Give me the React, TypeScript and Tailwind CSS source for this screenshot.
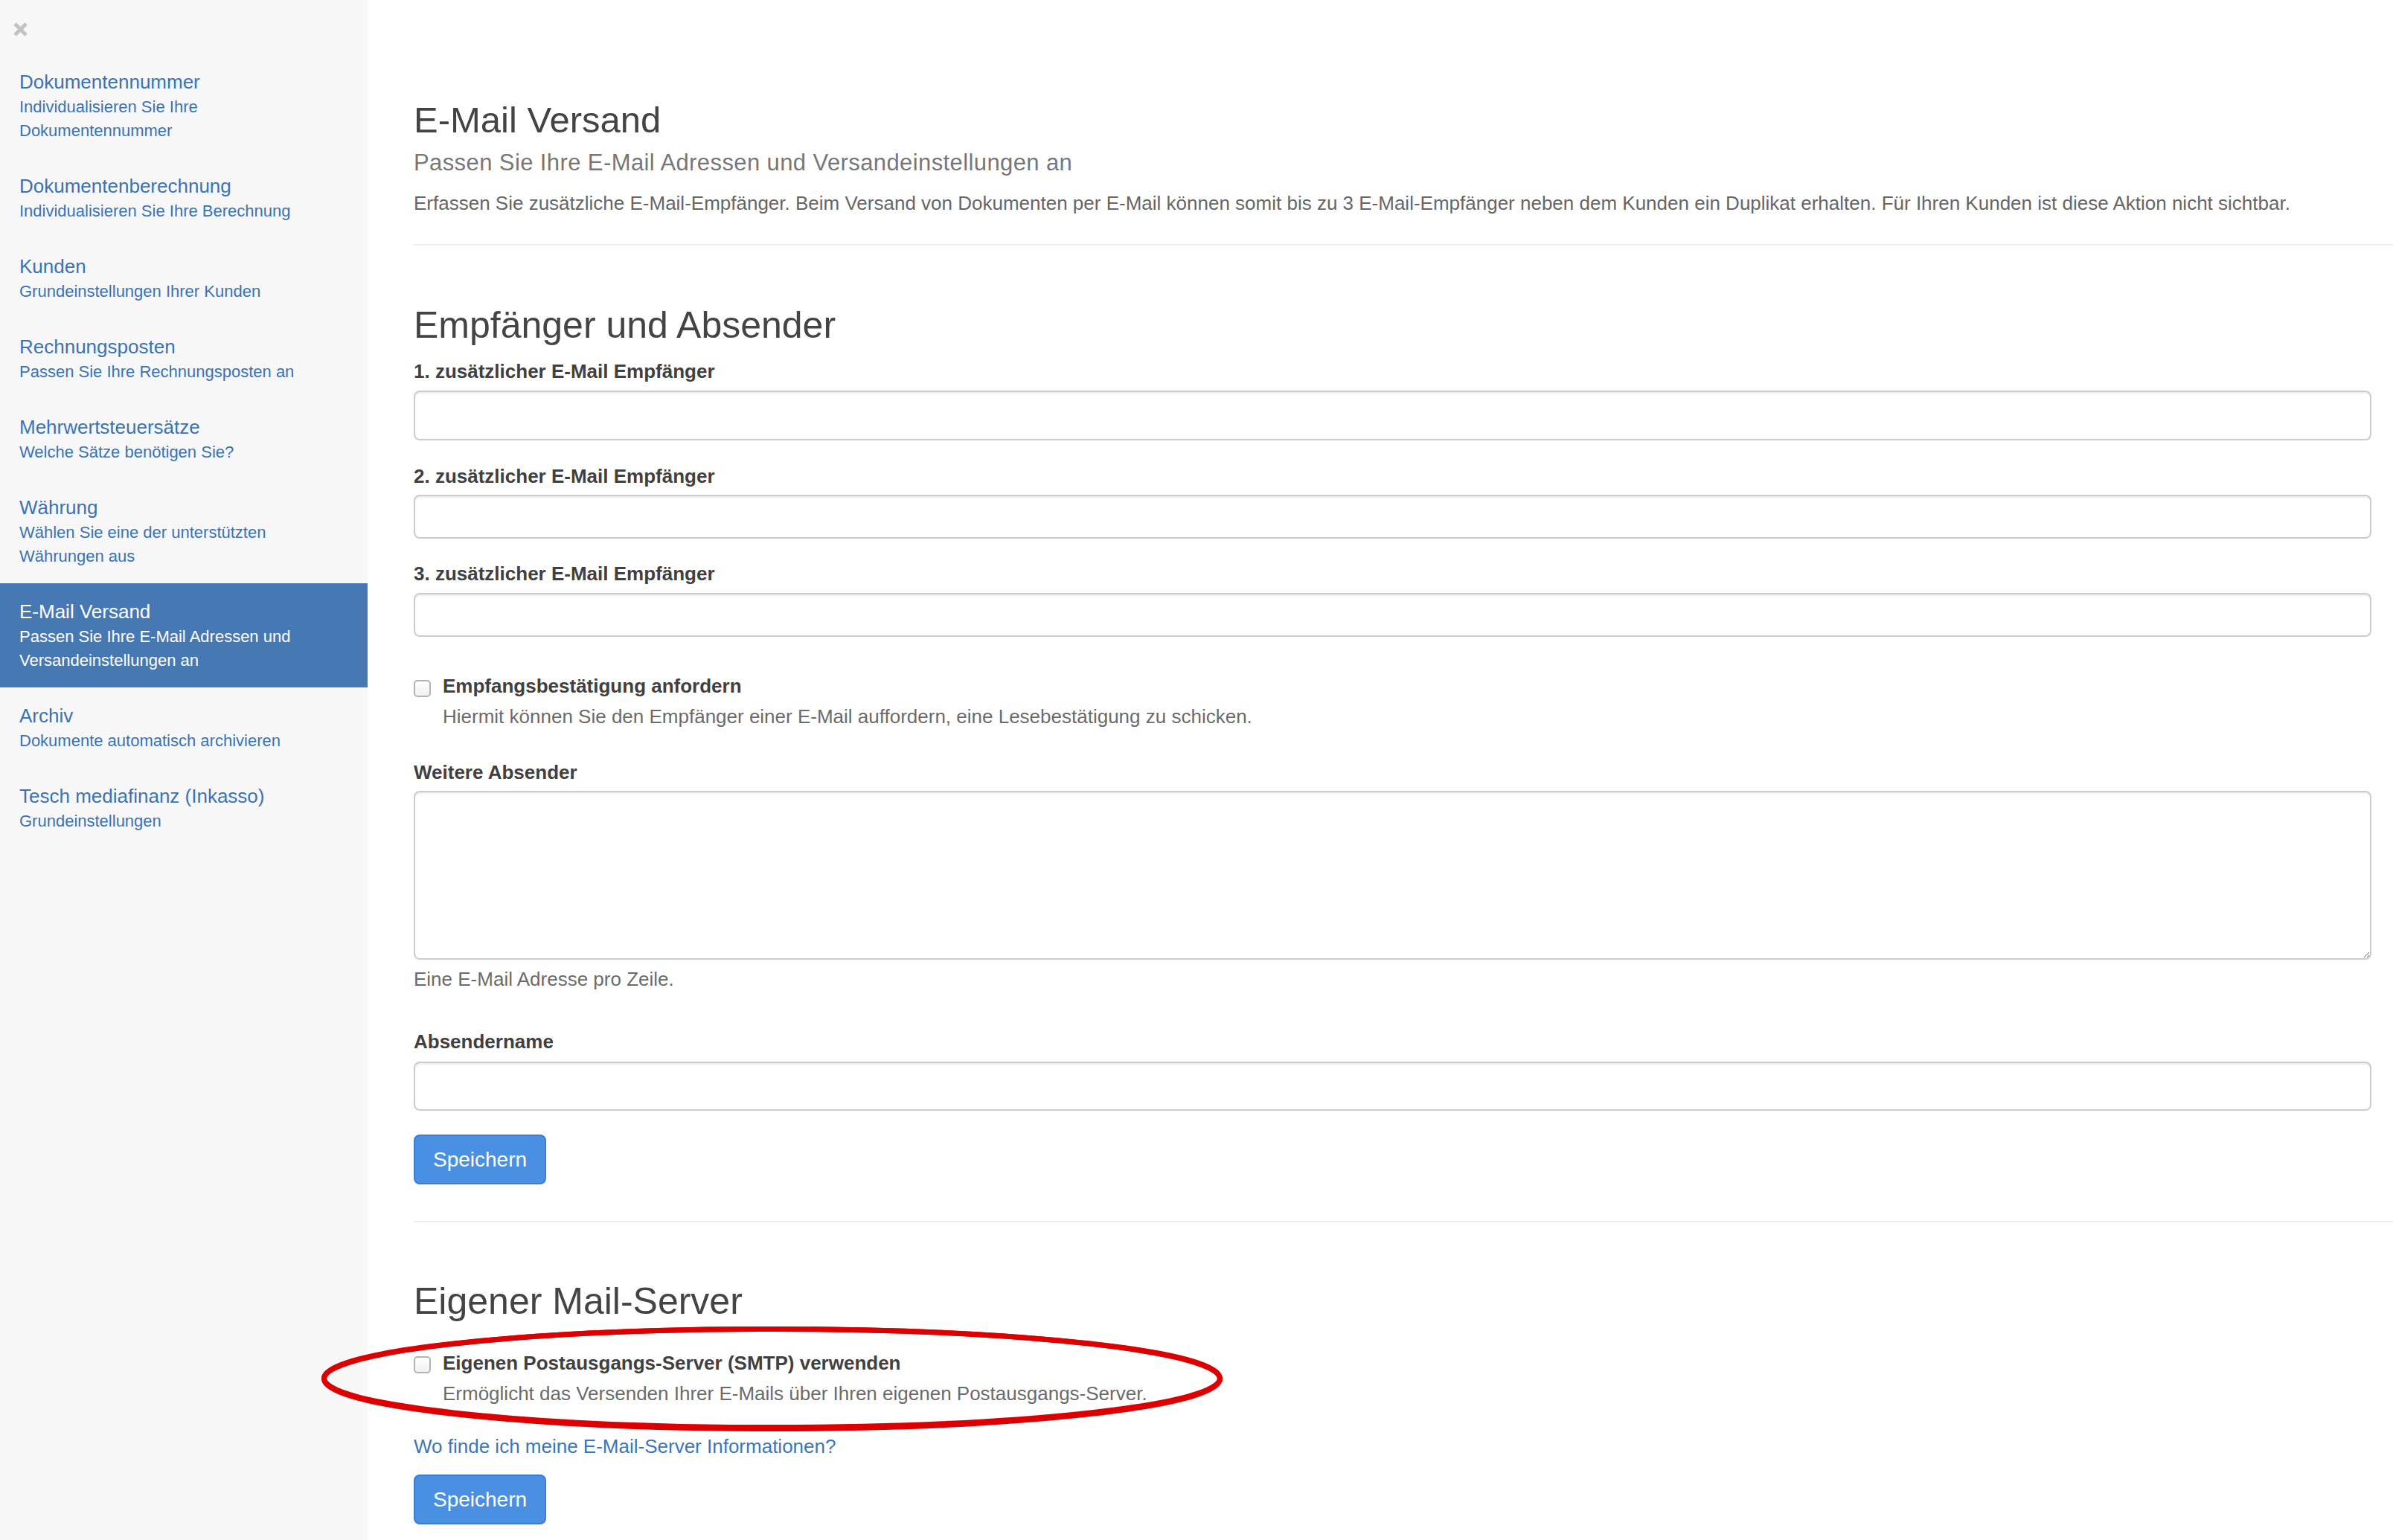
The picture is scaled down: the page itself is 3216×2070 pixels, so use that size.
import React from "react";

type NavItem = { title: string; sub: string[]; active?: boolean };

const navItems: NavItem[] = [
  { title: "Dokumentennummer", sub: ["Individualisieren Sie Ihre", "Dokumentennummer"] },
  { title: "Dokumentenberechnung", sub: ["Individualisieren Sie Ihre Berechnung"] },
  { title: "Kunden", sub: ["Grundeinstellungen Ihrer Kunden"] },
  { title: "Rechnungsposten", sub: ["Passen Sie Ihre Rechnungsposten an"] },
  { title: "Mehrwertsteuersätze", sub: ["Welche Sätze benötigen Sie?"] },
  { title: "Währung", sub: ["Wählen Sie eine der unterstützten", "Währungen aus"] },
  {
    title: "E-Mail Versand",
    sub: ["Passen Sie Ihre E-Mail Adressen und", "Versandeinstellungen an"],
    active: true,
  },
  { title: "Archiv", sub: ["Dokumente automatisch archivieren"] },
  { title: "Tesch mediafinanz (Inkasso)", sub: ["Grundeinstellungen"] },
];

const Sidebar: React.FC = () => (
  <aside className="w-[494px] shrink-0 bg-[#f7f7f7] pt-[29px]">
    <button className="ml-[17px] block h-[21px] w-[21px]">
      <svg viewBox="0 0 21 21" className="h-[21px] w-[21px]">
        <path d="M3 3 L18 18 M18 3 L3 18" stroke="#c2c2c2" strokeWidth="5" />
      </svg>
    </button>
    <nav className="mt-[22px]">
      {navItems.map((item) => (
        <a
          key={item.title}
          href="#"
          className={
            item.active
              ? "block bg-[#4679b4] px-[26px] py-[20px] text-white"
              : "block px-[26px] py-[20px] text-[#3a73b5]"
          }
        >
          <div className="text-[26px] leading-[36px]">{item.title}</div>
          {item.sub.map((line) => (
            <div key={line} className="text-[22px] leading-[32px]">
              {line}
            </div>
          ))}
        </a>
      ))}
    </nav>
  </aside>
);

const TextInput: React.FC<{ h: string }> = ({ h }) => (
  <input
    type="text"
    className={`block w-full ${h} rounded-[8px] border-2 border-[#cccccc] bg-white px-4 shadow-[inset_0_2px_2px_rgba(0,0,0,0.075)] outline-none`}
  />
);

const Label: React.FC<{ children: React.ReactNode; className?: string }> = ({
  children,
  className = "",
}) => (
  <label className={`block text-[26px] font-bold leading-[36px] text-[#404040] ${className}`}>
    {children}
  </label>
);

const SaveButton: React.FC<{ className?: string }> = ({ className = "" }) => (
  <button
    className={`block h-[67px] w-[178px] rounded-[8px] border-2 border-[#3b7dd6] bg-[#4a90e2] text-[28px] text-white ${className}`}
  >
    Speichern
  </button>
);

const CheckRow: React.FC<{ label: string; help: string; boxTop: string }> = ({
  label,
  help,
  boxTop,
}) => (
  <div className="flex">
    <input
      type="checkbox"
      className={`${boxTop} h-[23px] w-[23px] shrink-0 appearance-none rounded-[5px] border-2 border-[#b4b4b4] bg-gradient-to-b from-white to-[#f0f0f0]`}
    />
    <div className="ml-[16px]">
      <div className="text-[26px] font-bold leading-[36px] text-[#404040]">{label}</div>
      <div className="mt-[5px] text-[26px] leading-[36px] text-[#6b6b6b]">{help}</div>
    </div>
  </div>
);

export default function App() {
  return (
    <div
      className="relative flex min-h-screen bg-white"
      style={{ fontFamily: '"Liberation Sans", Arial, sans-serif' }}
    >
      <Sidebar />
      <main className="flex-1 pb-[21px] pl-[62px] pr-[29px] pt-[133px]">
        <h1 className="text-[49px] leading-[56px] text-[#444444]">E-Mail Versand</h1>
        <p className="mt-[12px] text-[31px] leading-[36px] tracking-[0.4px] text-[#777777]">
          Passen Sie Ihre E-Mail Adressen und Versandeinstellungen an
        </p>
        <p className="mt-[18px] whitespace-nowrap text-[26px] leading-[36px] text-[#666666]">
          Erfassen Sie zusätzliche E-Mail-Empfänger. Beim Versand von Dokumenten per E-Mail können
          somit bis zu 3 E-Mail-Empfänger neben dem Kunden ein Duplikat erhalten. Für Ihren Kunden ist
          diese Aktion nicht sichtbar.
        </p>
        <hr className="-mr-[29px] mt-[37px] border-t-2 border-[#eeeeee]" />

        <h2 className="mt-[79px] text-[50px] leading-[56px] text-[#444444]">
          Empfänger und Absender
        </h2>
        <Label className="mt-[16px]">1. zusätzlicher E-Mail Empfänger</Label>
        <div className="mt-[8px]">
          <TextInput h="h-[67px]" />
        </div>
        <Label className="mt-[30px]">2. zusätzlicher E-Mail Empfänger</Label>
        <div className="mt-[7px]">
          <TextInput h="h-[59px]" />
        </div>
        <Label className="mt-[29px]">3. zusätzlicher E-Mail Empfänger</Label>
        <div className="mt-[8px]">
          <TextInput h="h-[59px]" />
        </div>

        <div className="mt-[48px]">
          <CheckRow
            label="Empfangsbestätigung anfordern"
            help="Hiermit können Sie den Empfänger einer E-Mail auffordern, eine Lesebestätigung zu schicken."
            boxTop="mt-[10px]"
          />
        </div>

        <Label className="mt-[39px]">Weitere Absender</Label>
        <textarea className="mt-[7px] block h-[227px] w-full rounded-[8px] border-2 border-[#cccccc] bg-white p-4 shadow-[inset_0_2px_2px_rgba(0,0,0,0.075)] outline-none" />
        <p className="mt-[8px] text-[26px] leading-[36px] text-[#6b6b6b]">
          Eine E-Mail Adresse pro Zeile.
        </p>

        <Label className="mt-[48px]">Absendername</Label>
        <div className="mt-[9px]">
          <TextInput h="h-[66px]" />
        </div>
        <SaveButton className="mt-[32px]" />

        <hr className="-mr-[29px] mt-[49px] border-t-2 border-[#eeeeee]" />

        <h2 className="mt-[78px] text-[50px] leading-[56px] text-[#444444]">
          Eigener Mail-Server
        </h2>
        <div className="mt-[37px]">
          <CheckRow
            label="Eigenen Postausgangs-Server (SMTP) verwenden"
            help="Ermöglicht das Versenden Ihrer E-Mails über Ihren eigenen Postausgangs-Server."
            boxTop="mt-[9px]"
          />
        </div>
        <a href="#" className="mt-[35px] block text-[26px] leading-[36px] text-[#3a76b8]">
          Wo finde ich meine E-Mail-Server Informationen?
        </a>
        <SaveButton className="mt-[20px]" />
      </main>

      {/* red marker ring around the SMTP option */}
      <svg
        className="pointer-events-none absolute left-[420px] top-[1770px]"
        width="1240"
        height="170"
        viewBox="0 0 1240 170"
      >
        <ellipse cx="617.5" cy="82.5" rx="602" ry="66" fill="none" stroke="#dd0000" strokeWidth="7" />
        <ellipse cx="617.5" cy="83.5" rx="602" ry="67" fill="none" stroke="#dd0000" strokeWidth="7" />
      </svg>
    </div>
  );
}
